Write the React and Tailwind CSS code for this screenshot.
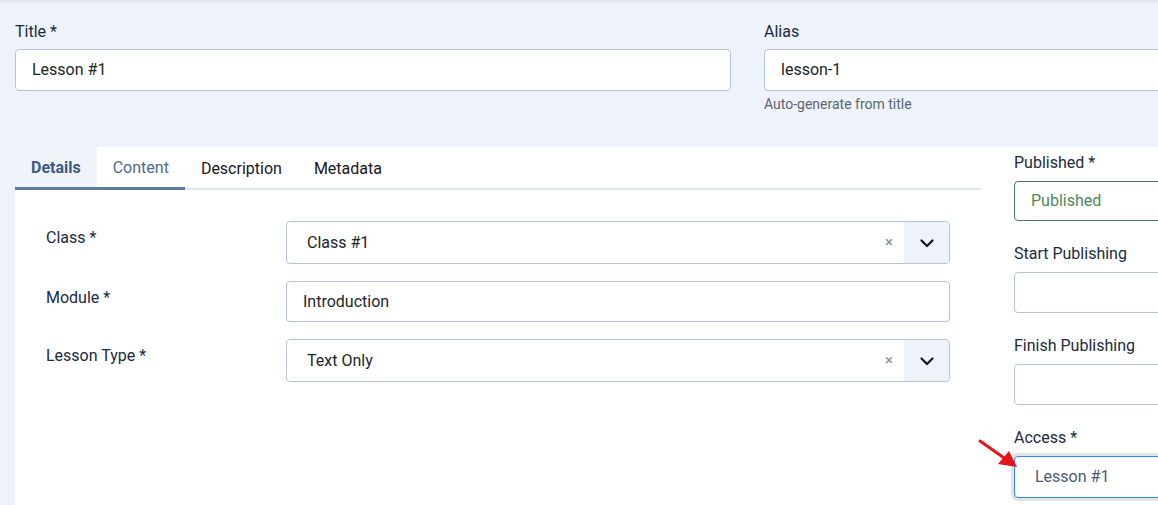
import React from 'react';

const font = { fontFamily: 'Roboto, "Noto Sans", sans-serif' };

const Chevron = () => (
  <svg width="16" height="16" viewBox="0 0 16 16" fill="none">
    <path d="M2.5 5.5 8 11l5.5-5.5" stroke="#111" strokeWidth="2.2" strokeLinecap="round" strokeLinejoin="round" />
  </svg>
);

const SelectBox = ({ value, h = 'h-[43px]' }) => (
  <div className={`flex ${h} w-[664px] items-stretch rounded border border-[#b4c4dc] bg-white`}>
    <span className="flex flex-1 items-center pl-5 text-base text-[#212529]">{value}</span>
    <span className="flex items-center pr-[11px] text-[15px] text-[#8a8f96]">×</span>
    <span className="flex w-[45px] items-center justify-center rounded-r bg-[#eef3fa]">
      <Chevron />
    </span>
  </div>
);

const SideField = ({ label, children }) => (
  <div className="flex flex-col">
    <label className="mb-[6px] h-6 text-base leading-6 text-[#1b2a41]">{label}</label>
    {children}
  </div>
);

export default function App() {
  return (
    <div
      style={font}
      className="h-[505px] w-[1158px] overflow-hidden bg-[#eef3fb] shadow-[inset_0_4px_4px_-3px_rgba(40,60,100,0.12)]"
    >
      <div className="w-[1250px]">
        {/* Title / Alias */}
        <div className="flex gap-[33px] px-[15px] pt-[19px]">
          <div className="flex w-[716px] flex-col">
            <label className="mb-[5px] h-[25px] pt-[1px] text-base leading-6 text-[#1b2a41]">Title *</label>
            <div className="flex h-[42px] items-center rounded border border-[#b4c4dc] bg-white pl-4 text-base text-[#212529]">
              Lesson #1
            </div>
          </div>
          <div className="flex w-[440px] flex-col">
            <label className="mb-[5px] h-[25px] pt-[1px] text-base leading-6 text-[#1b2a41]">Alias</label>
            <div className="flex h-[42px] items-center rounded border border-[#b4c4dc] bg-white pl-4 text-base text-[#212529]">
              lesson-1
            </div>
            <span className="mt-[3px] text-sm leading-5 text-[#5c6470]">Auto-generate from title</span>
          </div>
        </div>

        {/* Card */}
        <div className="relative ml-[15px] mt-[33px] flex h-[400px] gap-[33px] bg-white">
          <div className="w-[966px]">
            <div className="flex h-[43px] border-b-2 border-[#dde5f0] pt-[2px]">
              <div className="-mb-[2px] flex border-b-[3px] border-[#5b7ba1]">
                <span className="-mt-[2px] flex items-center bg-[#f0f4fa] px-4 pt-[2px] text-base font-bold text-[#3d5a80]">Details</span>
                <span className="flex items-center px-4 text-base text-[#4a6a95]">Content</span>
              </div>
              <span className="flex items-center px-4 text-base text-[#15181c]">Description</span>
              <span className="flex items-center px-4 text-base text-[#15181c]">Metadata</span>
            </div>

            <div className="flex flex-col gap-[17px] px-[31px] pt-[31px]">
              <div className="flex">
                <label className="w-[240px] pt-[5px] text-base leading-6 text-[#1b2a41]">Class *</label>
                <SelectBox value="Class #1" />
              </div>
              <div className="flex">
                <label className="w-[240px] pt-[5px] text-base leading-6 text-[#1b2a41]">Module *</label>
                <div className="flex h-[41px] w-[664px] items-center rounded border border-[#b4c4dc] bg-white pl-4 text-base text-[#212529]">
                  Introduction
                </div>
              </div>
              <div className="flex">
                <label className="w-[240px] pt-[5px] text-base leading-6 text-[#1b2a41]">Lesson Type *</label>
                <SelectBox value="Text Only" />
              </div>
            </div>
          </div>

          <div className="flex w-[240px] flex-col gap-[21px] pt-[4px]">
            <SideField label="Published *">
              <div className="flex h-[40px] items-center rounded border border-[#457d55] bg-white pl-4 text-base text-[#4b8a5b]">
                Published
              </div>
            </SideField>
            <SideField label="Start Publishing">
              <div className="h-[41px] rounded border border-[#b4c4dc] bg-white" />
            </SideField>
            <SideField label="Finish Publishing">
              <div className="h-[41px] rounded border border-[#b4c4dc] bg-white" />
            </SideField>
            <SideField label="Access *">
              <div className="flex h-[42px] items-center rounded border border-[#2b8be6] bg-white pl-5 text-base text-[#4a5a78] ring-[3px] ring-[#e2e4e8]">
                Lesson #1
              </div>
            </SideField>
          </div>

          {/* annotation arrow */}
          <svg className="absolute left-[962px] top-[291px]" width="52" height="38" viewBox="0 0 52 38">
            <line x1="3" y1="3" x2="30" y2="22" stroke="#e8141a" strokeWidth="3" strokeLinecap="round" />
            <polygon points="40,29 21,26 32,13" fill="#e8141a" />
          </svg>
        </div>
      </div>
    </div>
  );
}
